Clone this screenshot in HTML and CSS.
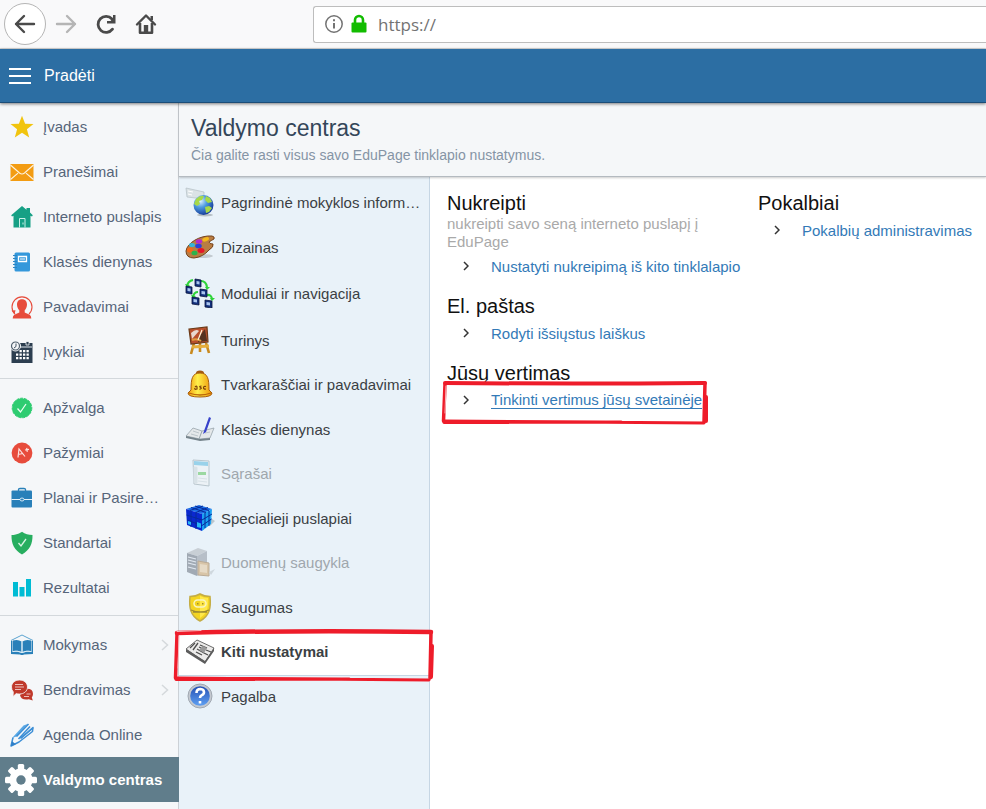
FILE: index.html
```html
<!DOCTYPE html>
<html lang="lt">
<head>
    <meta charset="UTF-8">
    <meta name="viewport" content="width=device-width, initial-scale=1.0">
    <title>Valdymo centras</title>
    <link rel="stylesheet" href="styles.css">
</head>
<body>
    <div class="browser-bar">
        <button type="button" class="nav-btn back-btn" aria-label="Atgal">
            <svg width="24" height="24" viewBox="0 0 24 24" fill="none" stroke="#4a4a4a" stroke-width="2.4" stroke-linecap="round" stroke-linejoin="round"><path d="M21 12H3M11 4L3 12l8 8"/></svg>
        </button>
        <button type="button" class="nav-btn" aria-label="Pirmyn">
            <svg width="24" height="24" viewBox="0 0 24 24" fill="none" stroke="#b5b5b5" stroke-width="2.4" stroke-linecap="round" stroke-linejoin="round"><path d="M3 12h18M13 4l8 8-8 8"/></svg>
        </button>
        <button type="button" class="nav-btn" aria-label="Atnaujinti">
            <svg width="24" height="24" viewBox="0 0 24 24"><path d="M18.500 17.200A8 8 0 1 1 18 7" fill="none" stroke="#4a4a4a" stroke-width="2.800" stroke-linecap="round"/><path d="M21.500 3v8.500H13V9h3.500l2.500-2.500V3z" fill="#4a4a4a"/></svg>
        </button>
        <button type="button" class="nav-btn" aria-label="Namai">
            <svg width="24" height="24" viewBox="0 0 24 24"><path d="M3 12.500L12 3.500l9 9" fill="none" stroke="#4a4a4a" stroke-width="2.400" stroke-linecap="round" stroke-linejoin="round"/><path d="M6 11v9.700h12V11" fill="none" stroke="#4a4a4a" stroke-width="2.600" stroke-linejoin="round"/><path d="M16.500 4h2.500v4h-2.500z" fill="#4a4a4a"/><path d="M9.800 20v-7h4.400v7z" fill="#4a4a4a"/></svg>
        </button>
        <div class="url-box">
            <svg width="20" height="20" viewBox="0 0 20 20"><circle cx="10" cy="10" r="8.200" fill="none" stroke="#737373" stroke-width="1.500"/><path d="M9 9h2v5.500H9zM9 5.200h2v2H9z" fill="#737373"/></svg>
            <svg width="18" height="20" viewBox="0 0 18 20"><path d="M5 9V6a4 4 0 0 1 8 0v3" fill="none" stroke="#12bc00" stroke-width="2.600"/><rect x="1.500" y="8.500" width="15" height="10" rx="1" fill="#12bc00"/></svg>
            <input type="text" class="url-input" value="https://" aria-label="Adresas">
        </div>
    </div>

    <header class="top-bar">
        <button type="button" class="menu-btn" aria-label="Meniu">
            <svg width="22" height="18" viewBox="0 0 22 18" fill="#fff"><path d="M0 1h22v2H0zM0 8h22v2H0zM0 15h22v2H0z"/></svg>
        </button>
        <a href="#" class="top-link">Pradėti</a>
    </header>

    <div class="page">
        <nav class="sidebar">
            <ul class="side-group">
                <li><a href="#" class="side-item">
                    <svg class="side-icon" viewBox="0 0 24 24"><path d="M12 .8l3.100 7.900 8.400.3-6.600 5.300 2.300 8.100-7.200-4.600-7.200 4.600 2.300-8.100L.5 9l8.400-.3z" fill="#f1c40f"/></svg>
                    Įvadas</a></li>
                <li><a href="#" class="side-item">
                    <svg class="side-icon" viewBox="0 0 24 24"><path d="M.5 4h23v17H.5z" fill="#f39c12"/><path d="M.5 5l9 8q2.500 2 5 0l9-8M.5 19.500l7.500-6.300M23.500 19.500L16 13.200" fill="none" stroke="#fdf3e0" stroke-width="1.100"/></svg>
                    Pranešimai</a></li>
                <li><a href="#" class="side-item">
                    <svg class="side-icon" viewBox="0 0 24 24"><path d="M12 1l4.500 3.800V3H20v4.500l2.800 2.800-.8 1.200-1.500-.7V22.500h-17V10.800l-1.500.7-.8-1.200z" fill="#16a085"/><path d="M9.500 22.500V13.500h5.500v9M13 17.500v2" fill="none" stroke="#c9f1e8" stroke-width="1"/></svg>
                    Interneto puslapis</a></li>
                <li><a href="#" class="side-item">
                    <svg class="side-icon" viewBox="0 0 24 24"><rect x="4.500" y="2.500" width="15.500" height="19" rx="1.500" fill="#3498db"/><path d="M3 5.500h4M3 8.500h4M3 11.500h4M3 14.500h4M3 17.500h4" stroke="#2c86c4" stroke-width="1"/><path d="M8.500 6.500h8v5h-8z" fill="#3498db" stroke="#fff" stroke-width="1.300"/><path d="M10 9h5" stroke="#fff"/></svg>
                    Klasės dienynas</a></li>
                <li><a href="#" class="side-item">
                    <svg class="side-icon" viewBox="0 0 24 24"><path d="M5 19A10 10 0 1 1 19 19" fill="none" stroke="#e74c3c" stroke-width="1.100"/><path d="M1.500 15.500l4-.3-1 4.300" fill="#e74c3c"/><path d="M12 4.200c3.300 0 5 2.200 5 5.300 0 2.500-1 4.500-2.300 5.800v2.200l5 2.200q1.600.9 1.600 3.800H2.700q0-2.900 1.600-3.800l5-2.200v-2.200C8 14 7 12 7 9.500c0-3.100 1.700-5.300 5-5.300z" fill="#e74c3c"/></svg>
                    Pavadavimai</a></li>
                <li><a href="#" class="side-item">
                    <svg class="side-icon" viewBox="0 0 24 24"><path d="M1.500 3h21v20h-21z" fill="#2c3e50"/><path d="M10 7h12" stroke="#dfe6ec" stroke-width="1"/><path d="M16 1.500h3v3.500h-3z" fill="#2c3e50" stroke="#f5f7f9" stroke-width=".8"/><path d="M9.500 10h2.300v2.300H9.500zM13 10h2.300v2.300H13zM16.500 10h2.300v2.300h-2.300zM6 13.500h2.300v2.300H6zM9.500 13.500h2.300v2.300H9.500zM13 13.500h2.300v2.300H13zM16.500 13.500h2.300v2.300h-2.300zM6 17h2.300v2.300H6zM9.500 17h2.300v2.300H9.500zM13 17h2.300v2.300H13zM16.500 17h2.300v2.300h-2.300z" fill="#fff"/><circle cx="5.500" cy="6" r="5" fill="#f5f7f9" stroke="#f5f7f9"/><circle cx="5.500" cy="6" r="4" fill="none" stroke="#52616f" stroke-width="1.200"/><path d="M6 3.500v3L4 8" fill="none" stroke="#2c3e50" stroke-width=".9"/></svg>
                    Įvykiai</a></li>
            </ul>
            <ul class="side-group">
                <li><a href="#" class="side-item">
                    <svg class="side-icon" viewBox="0 0 24 24"><circle cx="12" cy="12" r="9.800" fill="#2ecc71" stroke="#2ecc71" stroke-dasharray="3 1"/><path d="M7.500 12.500l3 3.500L16 8" fill="none" stroke="#e8fff1" stroke-width="1.300"/></svg>
                    Apžvalga</a></li>
                <li><a href="#" class="side-item">
                    <svg class="side-icon" viewBox="0 0 24 24"><circle cx="12" cy="12" r="10.400" fill="#e74c3c"/><path d="M8 16.500L9 8l6 7.500M8 13.500l5-1M15 9l4-.6M16.700 6.800l.6 4" fill="none" stroke="#fce4e1" stroke-width="1.200"/></svg>
                    Pažymiai</a></li>
                <li><a href="#" class="side-item">
                    <svg class="side-icon" viewBox="0 0 24 24"><path d="M8.500 5V3.500Q8.500 2.500 10 2.500h4q1.500 0 1.500 1V5" fill="none" stroke="#2980b9" stroke-width="1.300"/><rect x="1.500" y="4.500" width="20.500" height="17" rx="1" fill="#2980b9"/><path d="M1.500 13.500h8.500M14 13.500h8" stroke="#e8f3fa"/><ellipse cx="12" cy="13.500" rx="2" ry="1.500" fill="#2980b9" stroke="#e8f3fa" stroke-width=".9"/></svg>
                    Planai ir Pasire…</a></li>
                <li><a href="#" class="side-item">
                    <svg class="side-icon" viewBox="0 0 24 24"><path d="M12 .7q4.500 3.300 10.500 3.300c.2 9-2.800 15-10.500 19.500C4.300 19 1.300 13 1.500 4 7.500 4 12 .7 12 .7z" fill="#27ae60"/><path d="M8.500 12l2.500 3 5-7" fill="none" stroke="#d8f5e4" stroke-width="1.300"/></svg>
                    Standartai</a></li>
                <li><a href="#" class="side-item">
                    <svg class="side-icon" viewBox="0 0 24 24"><path d="M3 6h5v14.500H3zM9.500 11h5v9.500h-5zM16 3h5v17.500h-5z" fill="#00bcd4"/></svg>
                    Rezultatai</a></li>
            </ul>
            <ul class="side-group">
                <li><a href="#" class="side-item">
                    <svg class="side-icon" viewBox="0 0 24 24"><path d="M1 7.500l11-5.500 11 5.500" fill="none" stroke="#5ba3d0" stroke-width="1"/><path d="M1 8h1.500v11Q7 17.500 12 20q5-2.500 9.500-1V8H23v13l-9 .5q-2 1-4 0L1 21z" fill="#2980b9"/><path d="M3 7.500q5-1.500 8.500 1V19Q7.500 17 3 18zM12.500 8.500q3.500-2.500 8.500-1V18q-4.500-1-8.500 1z" fill="#2980b9"/><path d="M12 9v10M2.500 18.600q5-1.200 9.500 1 4.500-2.200 9.500-1" fill="none" stroke="#d9ecf8" stroke-width=".8"/></svg>
                    Mokymas
                    <svg class="arrow" viewBox="0 0 8 12"><path d="M1 1l5.500 5L1 11" fill="none" stroke="#d5d9dc" stroke-width="1.500"/></svg></a></li>
                <li><a href="#" class="side-item">
                    <svg class="side-icon" viewBox="0 0 24 24"><path d="M15 11q8-1 8 5 0 2-1.200 3.400l1 3.100-4-1.200Q11 22.500 10 17z" fill="#c0392b"/><path d="M9.500 2C14 2 17.500 4.800 17.500 9s-3.500 7-8 7q-1.800 0-3.200-.5L3 18.500l.3-4.600Q1.500 11.800 1.500 9C1.500 4.800 5 2 9.500 2z" fill="#c0392b" stroke="#f5f7f9" stroke-width=".8"/><path d="M5 6.500h8M5 9h9M5 11.500h6M14 18.500h5M16.500 16h4" stroke="#f3cdc9" stroke-width=".9"/></svg>
                    Bendravimas
                    <svg class="arrow" viewBox="0 0 8 12"><path d="M1 1l5.500 5L1 11" fill="none" stroke="#d5d9dc" stroke-width="1.500"/></svg></a></li>
                <li><a href="#" class="side-item">
                    <svg class="side-icon" viewBox="0 0 24 24"><path d="M.8 23.200L3 14 13.500 2.500 17.500 1 6.500 13.500 3.500 14.500" fill="#5aa9e6"/><path d="M3 14.500L1 23l8-4L22.500 8.500l.5-4L11 15" fill="none" stroke="#3d8fd6" stroke-width="1.500" stroke-linejoin="round"/><path d="M6.500 13.500L18.500 1M8.500 16L20 3.500M10.500 15.500L23 5" stroke="#3d8fd6" stroke-width="1.600"/><path d="M.8 23.200l1.300-5 3.700 3z" fill="#2f7fc8"/></svg>
                    Agenda Online</a></li>
                <li><a href="#" class="side-item active">
                    <svg class="gear-icon" viewBox="0 0 32 32"><g fill="#fff"><circle cx="16" cy="16" r="11.500"/><rect x="12.800" y="0" width="6.400" height="32" rx="1.500"/><rect x="12.800" y="0" width="6.400" height="32" rx="1.500" transform="rotate(45 16 16)"/><rect x="12.800" y="0" width="6.400" height="32" rx="1.500" transform="rotate(90 16 16)"/><rect x="12.800" y="0" width="6.400" height="32" rx="1.500" transform="rotate(135 16 16)"/></g><circle cx="16" cy="16" r="4.700" fill="#607d8b"/></svg>
                    Valdymo centras</a></li>
            </ul>
        </nav>

        <main class="content">
            <div class="content-head">
                <h1>Valdymo centras</h1>
                <p>Čia galite rasti visus savo EduPage tinklapio nustatymus.</p>
            </div>
            <div class="content-body">
                <ul class="settings-menu">
                    <li><a href="#">
                        <svg class="menu-icon" viewBox="0 0 30 30"><defs><radialGradient id="globe" cx=".35" cy=".3" r=".8"><stop offset="0" stop-color="#dff3ff"/><stop offset=".4" stop-color="#4d9be0"/><stop offset="1" stop-color="#0b2a8c"/></radialGradient></defs><path d="M1 1l18 4v7L2 10z" fill="#dbe3e6" stroke="#b3bfc4" stroke-width=".7"/><path d="M3 4l5 1M3 7l4 1" stroke="#fff"/><ellipse cx="20" cy="28" rx="8" ry="1.500" fill="#b6bfc4"/><circle cx="18.500" cy="18" r="10" fill="url(#globe)"/><path d="M11 12q4-4 8-3l-2 4-3 1 1 3-3 2-3-2zM21 9l4 2 2 4-4 1-3-3zM20 20l4-1 3 2-3 4-3 1z" fill="#a7d948"/></svg>
                        Pagrindinė mokyklos inform…</a></li>
                    <li class="gap-46"><a href="#">
                        <svg class="menu-icon" viewBox="0 0 30 30"><ellipse cx="16" cy="24" rx="12" ry="2" fill="#c3cbd1"/><path d="M1 19C2 11 15 3 27 4q3 .5 2 3-2 1-5 3 0 2 4 2 1 3-4 6-6 7-15 8Q1 26 1 19z" fill="#b97d43" stroke="#76431c" stroke-width="1"/><ellipse cx="20.500" cy="7.500" rx="3.500" ry="2" fill="#f5b81c" transform="rotate(-20 20 7)"/><ellipse cx="14" cy="9.500" rx="3.200" ry="2.200" fill="#b32ad0"/><ellipse cx="13.500" cy="14" rx="3.300" ry="2.300" fill="#2b43d9"/><ellipse cx="7" cy="13" rx="3" ry="2" fill="#35b5d8"/><ellipse cx="5" cy="18" rx="3" ry="2.500" fill="#f56a18"/><ellipse cx="9.500" cy="21" rx="3" ry="2.200" fill="#2bb34b"/><ellipse cx="16" cy="18.500" rx="3.500" ry="2.500" fill="#e5162a"/></svg>
                        Dizainas</a></li>
                    <li class="gap-47"><a href="#">
                        <svg class="menu-icon" viewBox="0 0 30 30"><path d="M2 8q1-5 6-6M16 3q5 0 6 6M21 17q6-1 6 5M8 19q1-5 5-5" fill="none" stroke="#2fd43a" stroke-width="2.200"/><path d="M0 6l5 1-3 3zM20 9h5l-3 3zM25 20h5l-3 3zM6 17l5 1-3 3z" fill="#2fd43a"/><g fill="#12307c" stroke="#0a1540" stroke-width=".8"><path d="M10 1l6 1v7l-6-1zM1 8l6 1v7l-6-1zM15 11l7 1v7l-7-1zM7 19l7 1v7l-7-1zM20 22l7 1v7l-7-1z"/></g><path d="M11.500 3l3 .6v3l-3-.6zM2.500 10l3 .6v3l-3-.6zM16.500 13l3.500.6v3l-3.500-.6zM8.500 21l3.500.6v3l-3.500-.6zM21.500 24l3.500.6v3l-3.500-.6z" fill="#a9c4ee"/></svg>
                        Moduliai ir navigacija</a></li>
                    <li><a href="#">
                        <svg class="menu-icon" viewBox="0 0 30 30"><path d="M9 18L6 29M21 18l3 10M15 16v11" stroke="#c98a1e" stroke-width="2.600"/><path d="M7 22l17-1" stroke="#e5ad3c" stroke-width="3"/><path d="M4 4l18-2 1 15-17 2z" fill="#b9502c" stroke="#6b3b18" stroke-width="1.200"/><path d="M6 8q5-5 8-2l-7 8z" fill="#e9d9d0"/><path d="M14 12l6-8 2 12-9 1z" fill="#553320"/><path d="M7 15q5-2 9 1" stroke="#df9b40" stroke-width="2" fill="none"/><path d="M17 5l-4 10" stroke="#fff4d8" stroke-width="1.200"/></svg>
                        Turinys</a></li>
                    <li><a href="#">
                        <svg class="menu-icon" viewBox="0 0 30 30"><defs><linearGradient id="bell"><stop offset="0" stop-color="#f29a0c"/><stop offset=".4" stop-color="#fff04a"/><stop offset="1" stop-color="#ee9308"/></linearGradient></defs><ellipse cx="15" cy="4" rx="4" ry="2.500" fill="#a25a14"/><path d="M6 21c0-11 1-17 9-17s9 6 9 17l3 3q0 4-12 4T3 24z" fill="url(#bell)" stroke="#a85d0b" stroke-width="1"/><path d="M4 24q11 4 22 0" fill="none" stroke="#b96509" stroke-width="1.300"/><path d="M10 18q2-2 2 0v2q-3 1-2-1M16.500 17q-3 0-1 1.500 2 1 -1 1.800M21 17.500q-2.500-.5-2.500 1.200t2.500 1.300" fill="none" stroke="#7c3e0a" stroke-width="1.200"/></svg>
                        Tvarkaraščiai ir pavadavimai</a></li>
                    <li><a href="#">
                        <svg class="menu-icon" viewBox="0 0 30 30"><path d="M1 22l7-8 9 3 12-3-4 10-10 1z" fill="#e4e8ea" stroke="#98a5ac" stroke-width=".8"/><path d="M1 22v2l14 3 10-1v-2l-10 1z" fill="#75838b"/><path d="M17 17l-3 8" stroke="#98a5ac"/><path d="M8 17l6 2M6 20l7 2M20 19l5-1" stroke="#bcc5ca"/><path d="M24 3l-5 14-1 3 3-2 5-14z" fill="#3742ca"/></svg>
                        Klasės dienynas</a></li>
                    <li class="disabled"><a href="#">
                        <svg class="menu-icon" viewBox="0 0 30 30"><path d="M8 2l16 1v25L9 26z" fill="#f0f3f4" stroke="#8a9ba3"/><path d="M9 3l14 1v4L9 7z" fill="#4cb3dd"/><path d="M9 9l3 .3V25l-3-.3zM13 20l9 1M13 23l9 1" fill="#c9d3d7" stroke="#c9d3d7"/><path d="M13 14h8v3h-8z" fill="#4fc04c"/></svg>
                        Sąrašai</a></li>
                    <li><a href="#">
                        <svg class="menu-icon" viewBox="0 0 30 30"><path d="M24 14l6 4-5 5z" fill="#bcc7ce"/><path d="M1 6l13-4 13 4-10 5z" fill="#1c6fe8"/><path d="M1 6l16 5v17L2 22z" fill="#0a28cf"/><path d="M17 11l10-5-1 15-9 7z" fill="#1aa0f2"/><path d="M1.500 12L17 17l10-6M2 17l15 5.500L26.500 16M6 8v16M11 9.500v16.500M20 9.500V25M24 8v15M6 4.500l15 5M10 3l14 4.500M5 7.500L18 3M11 9.500L23 4.500" fill="none" stroke="#072b9a" stroke-width="1"/><path d="M3 18l3 1v3l-3-1zM12 19l4 1.500V25l-4-1z" fill="#29b8f5"/></svg>
                        Specialieji puslapiai</a></li>
                    <li class="disabled"><a href="#">
                        <svg class="menu-icon" viewBox="0 0 30 30"><path d="M2 6l11-5 9 3-10 5z" fill="#a9adb3"/><path d="M2 6l10 3v20L2 25z" fill="#5b6472"/><path d="M12 9l10-5v20l-10 5z" fill="#878e98"/><path d="M3 10l8 2M3 13l8 2M3 16l8 2M3 20l8 2" stroke="#d8dfe8" stroke-width="1.200"/><path d="M13 14l11 2v13l-11-1z" fill="#c9995a" stroke="#8c6535"/><path d="M15 17l7 1v8l-7-1z" fill="#e4c494"/><path d="M24 25l6-3-4 6z" fill="#b7bfc4"/></svg>
                        Duomenų saugykla</a></li>
                    <li><a href="#">
                        <svg class="menu-icon" viewBox="0 0 30 30"><path d="M15 2q4 2.500 10 2.500C26 15 25 24 15 29 5 24 4 15 5 4.500 11 4.500 15 2 15 2z" fill="#f3d421" stroke="#c4ad45" stroke-width="1.500"/><path d="M15 4q4 2 8 2c.5 8 0 15-8 20z" fill="#ffe84a"/><rect x="9" y="8" width="12" height="7" rx="3.500" fill="none" stroke="#f9f5c0" stroke-width="1.500"/><path d="M12 11h1.500v1.500H12zM17 11h1.500v1.500H17z" fill="#a58f2b"/><path d="M6 18q9 4 18 0M8 20h14" fill="none" stroke="#9c8a32" stroke-width="1.300"/></svg>
                        Saugumas</a></li>
                    <li class="selected">
                        <a href="#">
                        <svg class="menu-icon" viewBox="0 0 30 30"><path d="M1 13L12 4l17 8-9 14z" fill="#ecebea" stroke="#6c6c6c" stroke-width="1"/><path d="M1 13v3l19 12 9-13v-3l-9 13z" fill="#5c5c5c"/><path d="M10 7l-5 5M13 7l-5 7M15 9l7 3M14 11l6 3M12 13l7 4M11 16l6 3M21 14l5 2M19 17l4 2" stroke="#4e4e4e" stroke-width="1.300"/><path d="M14 14l4-4 4 2-3 5z" fill="#999"/></svg>
                        Kiti nustatymai</a>
                        <svg class="marker marker-menu" viewBox="0 0 262 56" preserveAspectRatio="none" fill="none" stroke="#ee1c2a" stroke-linecap="round"><path d="M4 6L2.500 50M258 4l-1 46" stroke-width="3.500"/><path d="M4 5Q130 2 258 4" stroke-width="4.500"/><path d="M3 51.500L176 51M3 50l253 2" stroke-width="3"/><path d="M259 18l-1 31" stroke-width="4"/><path d="M4 3.500l24-1M6 8l-1 32" stroke="#f8b8bc" stroke-width="1"/></svg>
                    </li>
                    <li><a href="#">
                        <svg class="menu-icon" viewBox="0 0 30 30"><defs><linearGradient id="help" x2="0" y2="1"><stop offset="0" stop-color="#2450b4"/><stop offset="1" stop-color="#5fa0f2"/></linearGradient></defs><circle cx="15" cy="15" r="12" fill="#c4c9d0" stroke="#a0a8b2"/><circle cx="15" cy="15" r="9.800" fill="url(#help)"/><path d="M11.500 12q0-4 4-4 3.500.2 3.500 3.200 0 2-2.500 3.200-1.500.8-1.500 2.600M15 20v2.500" fill="none" stroke="#fff" stroke-width="2.600"/></svg>
                        Pagalba</a></li>
                </ul>

                <div class="sections">
                    <div class="column">
                        <section>
                            <h2>Nukreipti</h2>
                            <p>nukreipti savo seną interneto puslapį į EduPage</p>
                            <a href="#" class="setting-link"><svg class="chevron" viewBox="0 0 6 10"><path d="M1 1l4 4-4 4"/></svg><span>Nustatyti nukreipimą iš kito tinklalapio</span></a>
                        </section>
                        <section>
                            <h2>El. paštas</h2>
                            <a href="#" class="setting-link"><svg class="chevron" viewBox="0 0 6 10"><path d="M1 1l4 4-4 4"/></svg><span>Rodyti išsiųstus laiškus</span></a>
                        </section>
                        <section>
                            <h2>Jūsų vertimas</h2>
                            <a href="#" class="setting-link hovered"><svg class="chevron" viewBox="0 0 6 10"><path d="M1 1l4 4-4 4"/></svg><span>Tinkinti vertimus jūsų svetainėje</span>
                                <svg class="marker marker-link" viewBox="0 0 268 48" preserveAspectRatio="none" fill="none" stroke="#ee1c2a" stroke-linecap="round"><path d="M4 5L2.500 42M264 4l-1 39" stroke-width="3.500"/><path d="M4 4Q130 5 264 4" stroke-width="4"/><path d="M3 43.500L180 43M3 42l260 2" stroke-width="3"/><path d="M265 18v24" stroke-width="4"/><path d="M5 7L4 34" stroke="#f8b8bc" stroke-width="1"/></svg></a>
                        </section>
                    </div>
                    <div class="column">
                        <section>
                            <h2>Pokalbiai</h2>
                            <a href="#" class="setting-link"><svg class="chevron" viewBox="0 0 6 10"><path d="M1 1l4 4-4 4"/></svg><span>Pokalbių administravimas</span></a>
                        </section>
                    </div>
                </div>
            </div>
        </main>
    </div>
</body>
</html>
```
FILE: styles.css
```css
* {
    box-sizing: border-box;
}

body {
    margin: 0;
    min-height: 100vh;
    display: flex;
    flex-direction: column;
    font-family: "Liberation Sans", Arial, sans-serif;
    font-size: 15px;
    background-color: #fff;
}

ul {
    list-style: none;
    margin: 0;
    padding: 0;
}

a {
    text-decoration: none;
}

svg {
    display: block;
    flex-shrink: 0;
}

button {
    padding: 0;
    border: none;
    background: none;
    cursor: pointer;
}

/* browser toolbar */
.browser-bar {
    display: flex;
    align-items: center;
    height: 49px;
    padding-left: 4px;
    background-color: #f9f9fa;
    border-bottom: 1px solid #d8d8d8;
}

.nav-btn {
    display: flex;
    align-items: center;
    justify-content: center;
    width: 40px;
    height: 42px;
}

.back-btn {
    width: 42px;
    border: 1px solid #b5b5b5;
    border-radius: 50%;
    background-color: #fff;
}

.url-box {
    flex: 1;
    display: flex;
    align-items: center;
    gap: 6px;
    height: 37px;
    margin-left: 147px;
    padding-left: 10px;
    background-color: #fff;
    border: 1px solid #bdbdbd;
    border-right: none;
    border-radius: 3px 0 0 3px;
}

.url-input {
    flex: 1;
    min-width: 0;
    padding: 0 4px;
    border: none;
    outline: none;
    font-family: "Open Sans", "Noto Sans", sans-serif;
    font-size: 17px;
    color: #737373;
    background: none;
}

/* blue header */
.top-bar {
    position: relative;
    z-index: 2;
    display: flex;
    align-items: center;
    gap: 13px;
    height: 54px;
    padding-left: 9px;
    background-color: #2c6ea3;
    border-bottom: 1px solid #1b4d78;
    box-shadow: 0 1px 3px rgba(0, 0, 0, 0.5);
}

.top-link {
    font-size: 16px;
    color: #fff;
}

.page {
    flex: 1;
    display: flex;
}

/* left navigation */
.sidebar {
    width: 179px;
    flex-shrink: 0;
    background-color: #f5f7f9;
    border-right: 1px solid #ccd1d6;
}

.side-group {
    padding: 6px 0 5px;
    border-top: 1px solid #d3d8dc;
}

.side-group:first-child {
    padding: 1px 0 4px;
    border-top: none;
}

.side-item {
    display: flex;
    align-items: center;
    gap: 9px;
    height: 45px;
    padding: 0 9px 0 10px;
    color: #56657a;
}

.side-icon {
    width: 24px;
    height: 24px;
}

.side-item.active {
    gap: 6px;
    padding-left: 5px;
    margin-right: -1px;
    font-weight: bold;
    color: #fff;
    background-color: #607d8b;
}

.gear-icon {
    width: 32px;
    height: 32px;
}

.arrow {
    width: 8px;
    height: 12px;
    margin-left: auto;
}

/* content */
.content {
    flex: 1;
    min-width: 0;
    display: flex;
    flex-direction: column;
}

.content-head {
    position: relative;
    z-index: 1;
    padding: 10px 12px 11px;
    background-color: #f5f7f9;
    border-bottom: 1px solid #b4bac0;
    box-shadow: 0 1px 2px rgba(0, 0, 0, 0.2);
}

.content-head h1 {
    margin: 0 0 2px;
    font-size: 23px;
    font-weight: normal;
    line-height: 30px;
    color: #34465a;
}

.content-head p {
    margin: 0;
    font-size: 14px;
    line-height: 20px;
    color: #8594a5;
}

.content-body {
    flex: 1;
    display: flex;
}

.settings-menu {
    width: 251px;
    flex-shrink: 0;
    padding-top: 5px;
    background-color: #e9f2f9;
    border-right: 1px solid #c6d6e4;
}

.settings-menu li {
    position: relative;
    height: 44px;
}

.settings-menu li:nth-child(odd) {
    height: 45px;
}

.settings-menu .gap-46 {
    height: 46px;
}

.settings-menu li.gap-47 {
    height: 47px;
}

.settings-menu a {
    display: flex;
    align-items: center;
    gap: 6px;
    height: 40px;
    padding-left: 6px;
    color: #3b3f44;
    white-space: nowrap;
}

.menu-icon {
    width: 30px;
    height: 30px;
}

.settings-menu .disabled a {
    color: #9fa7ad;
}

.disabled .menu-icon {
    opacity: 0.5;
}

.settings-menu .selected {
    background-color: #fff;
    border-bottom: 1px solid #c6d6e4;
}

.selected a {
    font-weight: bold;
}

.sections {
    flex: 1;
    display: grid;
    grid-template-columns: 15fr 11fr;
    align-content: start;
    padding: 14px 0 0 17px;
}

.sections section {
    margin-bottom: 13px;
}

.sections h2 {
    margin: 0;
    font-size: 20px;
    font-weight: normal;
    line-height: 24px;
    color: #111;
}

.sections p {
    margin: 0;
    padding-right: 40px;
    line-height: 18px;
    color: #a9a9a9;
}

.setting-link {
    position: relative;
    display: flex;
    align-items: center;
    gap: 22px;
    height: 30px;
    padding-left: 16px;
    color: #337ab7;
    white-space: nowrap;
}

.hovered span {
    border-bottom: 1px solid #337ab7;
}

.chevron {
    width: 6px;
    height: 10px;
    fill: none;
    stroke: #333;
    stroke-width: 1.5;
}

/* red hand-drawn frames over the highlighted rows */
.marker {
    position: absolute;
    z-index: 3;
    pointer-events: none;
}

.marker-menu {
    top: -3px;
    left: -6px;
    width: 262px;
    height: 56px;
}

.marker-link {
    top: -6px;
    left: -6px;
    width: 268px;
    height: 48px;
}
```
